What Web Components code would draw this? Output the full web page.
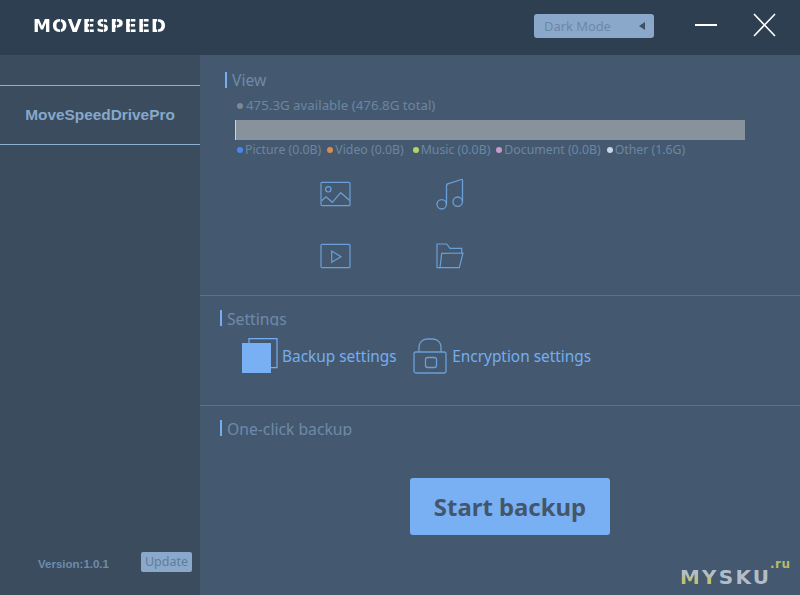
<!DOCTYPE html>
<html>
<head>
<meta charset="utf-8">
<title>MoveSpeed</title>
<style>
  html,body{ margin:0; padding:0; background:#44596f; }
  body{ width:800px; height:595px; overflow:hidden; font-family:"Noto Sans","Liberation Sans",sans-serif; }
</style>
</head>
<body>
<ms-app></ms-app>
<script>
(function(){
  const icons = {
    picture:`<svg width="31" height="26" viewBox="0 0 31 26" fill="none" stroke="#6a9fd8" stroke-width="1.2"><rect x="1" y="1.300" width="29" height="23.400" rx="1"/><circle cx="8.300" cy="8.300" r="2.700"/><path d="M1.700 19.700L6 15.700l6.300 5.600 8.400-9.600 9.300 8"/></svg>`,
    music:`<svg width="30" height="33" viewBox="0 0 30 33" fill="none" stroke="#6a9fd8" stroke-width="1.300"><circle cx="6.700" cy="26.300" r="4.700"/><circle cx="22.700" cy="23.700" r="4.700"/><path d="M11.500 26V8q0-2 2-2.500l13-4q1-.3 1 .7v21.500"/></svg>`,
    video:`<svg width="31" height="26" viewBox="0 0 31 26" fill="none" stroke="#6a9fd8" stroke-width="1.200"><rect x="1" y="1.300" width="29" height="23.400" rx="1"/><path d="M11.700 8v11.300l9.300-5.600z"/></svg>`,
    folder:`<svg width="28" height="26" viewBox="0 0 28 26" fill="none" stroke="#6a9fd8" stroke-width="1.200"><path d="M4 24.700H1V1h9.700L14 5.300h11.700v4.400"/><path d="M5.700 10.300L27 10l-3.700 14.700H4z"/></svg>`,
    copy:`<svg width="36" height="36" viewBox="0 0 36 36"><path d="M7 5V.6h28v29h-6" fill="none" stroke="#74aef0" stroke-width="1.200"/><rect x="0" y="5" width="29" height="30" fill="#78b0f3"/></svg>`,
    lock:`<svg width="34" height="36" viewBox="0 0 34 36" fill="none" stroke="#6a9fd8" stroke-width="1.300" style="margin-right:1.500px"><rect x="1" y="14" width="32" height="21" rx="2"/><path d="M6 14V9a8 8 0 0 1 8-8h6a8 8 0 0 1 8 8v5"/><rect x="12.500" y="19.500" width="11" height="10" rx="2"/></svg>`
  };

  // stencil cuts through the logo letters, x from the logo's left edge
  const cuts = [27, 56, 70, 83, 97, 110.500, 124];
  let stops = [];
  cuts.forEach(x=>{
    stops.push(`#000 ${x}px`, `rgba(0,0,0,.2) ${x}px`, `rgba(0,0,0,.2) ${x+1}px`, `#000 ${x+1}px`);
  });
  const logoMask = `linear-gradient(90deg,${stops.join(',')})`;

  class MsHeader extends HTMLElement{
    connectedCallback(){
      this.attachShadow({mode:'open'}).innerHTML = `
        <style>
          :host{ display:flex; align-items:center; height:55px; background:#2e3f52; color:#fff; }
          .logo{ font:bold 18px "DejaVu Sans",sans-serif; letter-spacing:1.050px; margin-left:33px; width:501px; margin-top:-4px;
                 -webkit-mask-image:${logoMask}; mask-image:${logoMask}; }
          .mode{ display:flex; align-items:center; justify-content:space-between; box-sizing:border-box; width:120px; height:24px; padding:0 9px 0 10px;
                 background:#8aa8c9; border-radius:3px; color:#6b88a8; font-size:12.900px; margin-top:-4px; }
          .tri{ width:0; height:0; border:4px solid transparent; border-right:6px solid #3f5064; border-left:0; }
          .btns{ display:flex; align-items:center; margin-left:41px; gap:36px; margin-top:-5px; }
          svg{ display:block; }
        </style>
        <div class="logo">MOVESPEED</div>
        <div class="mode">Dark Mode<span class="tri"></span></div>
        <div class="btns">
          <svg width="22" height="24" viewBox="0 0 22 24" stroke="#fff" stroke-width="2" style="margin-top:1px"><path d="M0 11h22"/></svg>
          <svg width="23" height="24" viewBox="0 0 23 24" stroke="#fff" stroke-width="1.600"><path d="M1 1l21 22M22 1L1 23"/></svg>
        </div>`;
    }
  }

  class MsSidebar extends HTMLElement{
    connectedCallback(){
      this.attachShadow({mode:'open'}).innerHTML = `
        <style>
          :host{ display:flex; flex-direction:column; width:200px; height:540px; background:#3b4c5e; padding-top:30px; box-sizing:border-box; }
          .drive{ height:58px; display:flex; align-items:center; justify-content:center; border-top:1px solid #8fb0d3; border-bottom:1px solid #8fb0d3;
                  color:#86a8cb; font:bold 15.400px "Liberation Sans",sans-serif; }
          .foot{ margin-top:auto; display:flex; align-items:center; padding:0 8px 23px 38px; justify-content:space-between; }
          .ver{ color:#6b8cad; font:bold 11.500px "Liberation Sans",sans-serif; margin-top:3px; }
          .up{ background:#8aa8c9; color:#5f7d9e; font-size:12.500px; height:20px; line-height:19px; padding:0 4px; border-radius:2px; }
        </style>
        <div class="drive"><slot></slot></div>
        <div class="foot"><span class="ver">Version:1.0.1</span><span class="up">Update</span></div>`;
    }
  }

  class MsSection extends HTMLElement{
    connectedCallback(){
      const t = this.getAttribute('heading');
      this.attachShadow({mode:'open'}).innerHTML = `
        <style>
          :host{ display:block; box-sizing:border-box; border-bottom:1px solid #5c728a; padding-top:var(--top,14px); }
          :host(:last-of-type){ border-bottom:0; }
          h2{ margin:0; height:16px; line-height:var(--lh,19px); overflow:hidden; font-size:15.700px; font-weight:400; color:#6f8aa8;
              border-left:2px solid #74aef0; padding-left:5px; margin-left:var(--left,20px); }
        </style>
        <h2>${t}</h2>
        <slot></slot>`;
    }
  }

  class MsUsage extends HTMLElement{
    connectedCallback(){
      this.attachShadow({mode:'open'}).innerHTML = `
        <style>
          :host{ display:block; padding-left:35px; color:#6b86a3; font-size:12.300px; }
          .avail{ margin:9px 0 0 2px; line-height:17px; display:flex; align-items:center; gap:3px; font-size:13.300px; }
          .d{ width:6px; height:6px; border-radius:50%; background:var(--c,#7d8894); flex:none; }
          .bar{ width:510px; height:20px; margin-top:6px; background:#87929c; border-left:1px solid #c5d5e5; box-sizing:border-box; }
          .legend{ display:flex; gap:6px; margin:1px 0 0 2px; line-height:17px; }
          .legend span{ display:flex; align-items:center; gap:2px; }
        </style>
        <div class="avail"><i class="d"></i>475.3G available (476.8G total)</div>
        <div class="bar"></div>
        <div class="legend">
          <span><i class="d" style="--c:#4a86f0"></i>Picture (0.0B)</span>
          <span><i class="d" style="--c:#d88c52"></i>Video (0.0B)</span>
          <span style="margin-left:3px"><i class="d" style="--c:#b4d468"></i>Music (0.0B)</span>
          <span><i class="d" style="--c:#c99ac8"></i>Document (0.0B)</span>
          <span><i class="d" style="--c:#c5d8ec"></i>Other (1.6G)</span>
        </div>`;
    }
  }

  class MsFileTypes extends HTMLElement{
    connectedCallback(){
      this.attachShadow({mode:'open'}).innerHTML = `
        <style>
          :host{ display:grid; grid-template-columns:115px 30px; grid-auto-rows:62px; padding:5px 0 0 120px; align-items:center; }
          div{ display:flex; align-items:center; }
          svg{ display:block; }
        </style>
        <div>${icons.picture}</div><div>${icons.music}</div>
        <div>${icons.video}</div><div style="margin-left:1px">${icons.folder}</div>`;
    }
  }

  class MsLink extends HTMLElement{
    connectedCallback(){
      this.attachShadow({mode:'open'}).innerHTML = `
        <style>
          :host{ display:flex; align-items:center; gap:4px; color:#74aef0; font-size:15.400px; }
          svg{ display:block; }
        </style>
        ${icons[this.getAttribute('icon')]}<slot></slot>`;
    }
  }

  class MsSettings extends HTMLElement{
    connectedCallback(){
      this.attachShadow({mode:'open'}).innerHTML = `
        <style>:host{ display:flex; align-items:flex-start; gap:16px; padding:12px 0 0 42px; }</style>
        <slot></slot>`;
    }
  }

  class MsStart extends HTMLElement{
    connectedCallback(){
      this.attachShadow({mode:'open'}).innerHTML = `
        <style>
          :host{ display:block; width:200px; height:57px; margin:42px 0 0 210px; background:#78b0f3; border-radius:3px;
                 color:#44566c; font:700 23.900px/57px "Noto Sans",sans-serif; text-align:center; }
        </style>
        <slot></slot>`;
    }
  }

  class MsWatermark extends HTMLElement{
    connectedCallback(){
      this.attachShadow({mode:'open'}).innerHTML = `
        <style>
          :host{ position:absolute; left:680px; top:559px; font:bold 20px "DejaVu Sans",sans-serif; letter-spacing:2.200px; color:#b3bdc8; line-height:36px; white-space:nowrap; }
          b{ background:linear-gradient(#b3bdc8 35%,#c2c25c 75%); -webkit-background-clip:text; background-clip:text; color:transparent; }
          sup{ position:absolute; left:90px; top:-13px; font-size:12px; letter-spacing:.5px; color:#b8b96a; }
        </style>
        <b>MY</b>SKU<sup>.ru</sup>`;
    }
  }

  class MsApp extends HTMLElement{
    connectedCallback(){
      this.attachShadow({mode:'open'}).innerHTML = `
        <style>
          :host{ display:block; position:relative; width:800px; height:595px; background:#44596f; overflow:hidden; }
          .body{ display:flex; height:540px; }
          main{ flex:1; display:flex; flex-direction:column; }
          .view{ height:241px; --left:25px; --top:17px; --lh:17px; }
          .settings{ height:110px; }
          .backup{ flex:1; }
        </style>
        <ms-header></ms-header>
        <div class="body">
          <ms-sidebar>MoveSpeedDrivePro</ms-sidebar>
          <main>
            <ms-section class="view" heading="View"><ms-usage></ms-usage><ms-file-types></ms-file-types></ms-section>
            <ms-section class="settings" heading="Settings">
              <ms-settings>
                <ms-link icon="copy">Backup settings</ms-link>
                <ms-link icon="lock">Encryption settings</ms-link>
              </ms-settings>
            </ms-section>
            <ms-section class="backup" heading="One-click backup"><ms-start>Start backup</ms-start></ms-section>
          </main>
        </div>
        <ms-watermark></ms-watermark>`;
    }
  }

  customElements.define('ms-header', MsHeader);
  customElements.define('ms-sidebar', MsSidebar);
  customElements.define('ms-section', MsSection);
  customElements.define('ms-usage', MsUsage);
  customElements.define('ms-file-types', MsFileTypes);
  customElements.define('ms-link', MsLink);
  customElements.define('ms-settings', MsSettings);
  customElements.define('ms-start', MsStart);
  customElements.define('ms-watermark', MsWatermark);
  customElements.define('ms-app', MsApp);
})();
</script>
</body>
</html>
